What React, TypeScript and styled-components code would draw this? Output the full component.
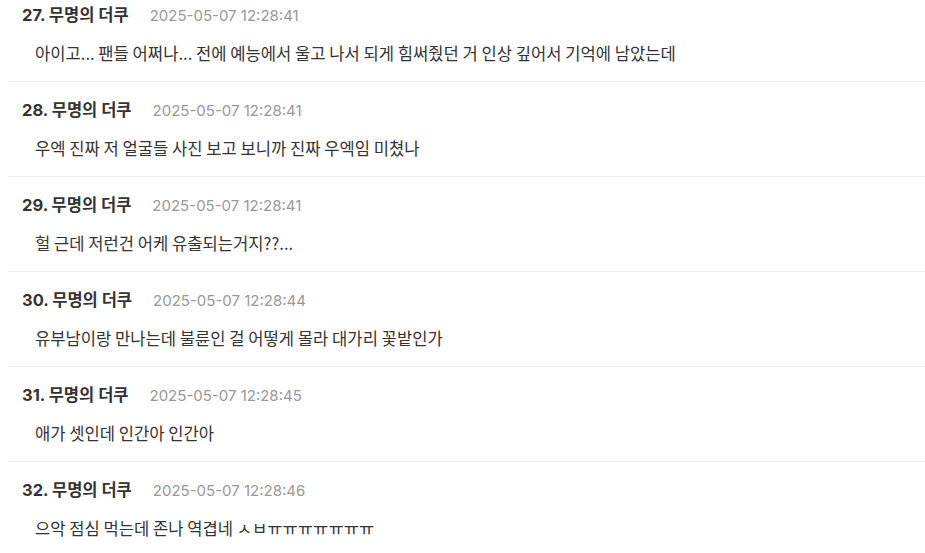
import React from "react";
import styled, { createGlobalStyle } from "styled-components";

const GlobalStyle = createGlobalStyle`
  html, body {
    margin: 0;
    padding: 0;
    background: #fff;
  }
  body {
    font-family: Inter, "Noto Sans CJK KR", sans-serif;
    overflow: hidden;
  }
`;

type Comment = {
  no: number;
  name: string;
  date: string;
  text: string;
};

const comments: Comment[] = [
  {
    no: 27,
    name: "무명의 더쿠",
    date: "2025-05-07 12:28:41",
    text: "아이고... 팬들 어쩌나... 전에 예능에서 울고 나서 되게 힘써줬던 거 인상 깊어서 기억에 남았는데",
  },
  {
    no: 28,
    name: "무명의 더쿠",
    date: "2025-05-07 12:28:41",
    text: "우엑 진짜 저 얼굴들 사진 보고 보니까 진짜 우엑임 미쳤나",
  },
  {
    no: 29,
    name: "무명의 더쿠",
    date: "2025-05-07 12:28:41",
    text: "헐 근데 저런건 어케 유출되는거지??...",
  },
  {
    no: 30,
    name: "무명의 더쿠",
    date: "2025-05-07 12:28:44",
    text: "유부남이랑 만나는데 불륜인 걸 어떻게 몰라 대가리 꽃밭인가",
  },
  {
    no: 31,
    name: "무명의 더쿠",
    date: "2025-05-07 12:28:45",
    text: "애가 셋인데 인간아 인간아",
  },
  {
    no: 32,
    name: "무명의 더쿠",
    date: "2025-05-07 12:28:46",
    text: "으악 점심 먹는데 존나 역겹네 ㅅㅂㅠㅠㅠㅠㅠㅠㅠ",
  },
];

const List = styled.ul`
  list-style: none;
  margin: -13px 0 0 8px;
  padding: 0;
`;

const Item = styled.li`
  padding: 18px 0 17px 14px;
  border-bottom: 1px solid #ededed;
`;

const Header = styled.div`
  display: flex;
  align-items: baseline;
  gap: 21px;
  height: 20px;
  line-height: 20px;
`;

const Author = styled.span`
  font-family: Inter, "Noto Sans CJK KR", sans-serif;
  font-weight: 700;
  font-size: 16.5px;
  color: #333;
`;

const DateText = styled.span`
  font-family: Inter, "Noto Sans CJK KR", sans-serif;
  font-size: 15px;
  color: #999;
`;

const Body = styled.p`
  margin: 17px 0 0;
  padding-left: 13px;
  height: 22px;
  line-height: 22px;
  font-family: "Noto Sans CJK KR", sans-serif;
  font-size: 16.6px;
  color: #333;
  white-space: nowrap;
`;

export default function App() {
  return (
    <>
      <GlobalStyle />
      <List>
        {comments.map((c) => (
          <Item key={c.no}>
            <Header>
              <Author>
                {c.no}. {c.name}
              </Author>
              <DateText>{c.date}</DateText>
            </Header>
            <Body>{c.text}</Body>
          </Item>
        ))}
      </List>
    </>
  );
}
